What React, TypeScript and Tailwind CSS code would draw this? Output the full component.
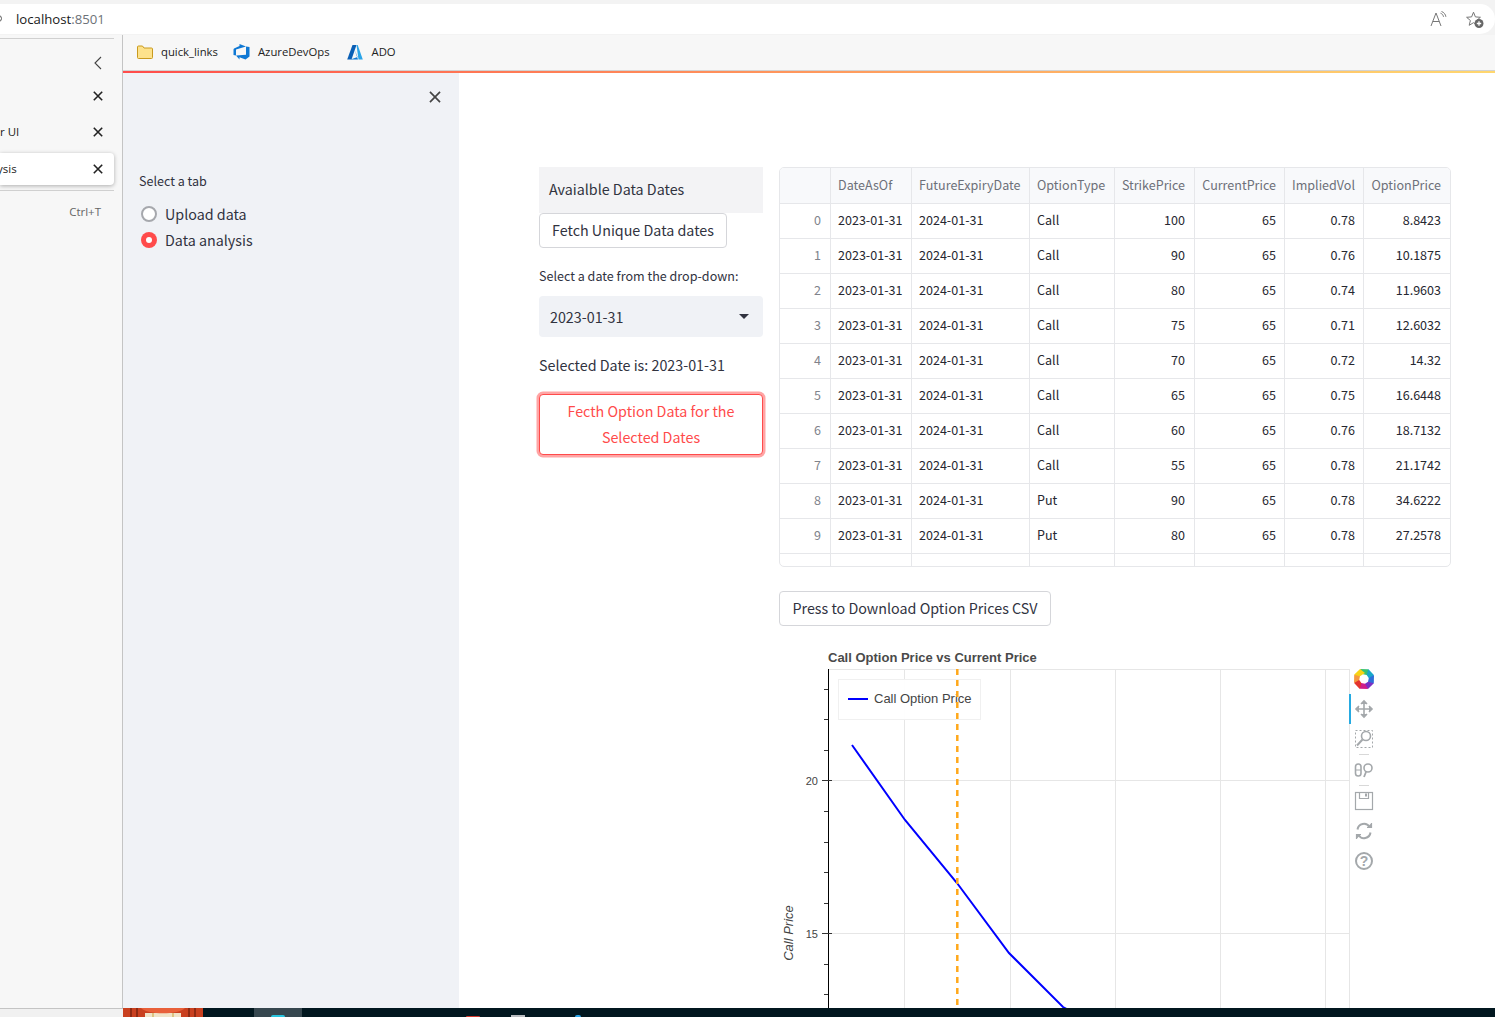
import React from "react";

const SRC = '"Noto Sans CJK SC", "Noto Sans", sans-serif';

const rows: string[][] = [
  ["0", "2023-01-31", "2024-01-31", "Call", "100", "65", "0.78", "8.8423"],
  ["1", "2023-01-31", "2024-01-31", "Call", "90", "65", "0.76", "10.1875"],
  ["2", "2023-01-31", "2024-01-31", "Call", "80", "65", "0.74", "11.9603"],
  ["3", "2023-01-31", "2024-01-31", "Call", "75", "65", "0.71", "12.6032"],
  ["4", "2023-01-31", "2024-01-31", "Call", "70", "65", "0.72", "14.32"],
  ["5", "2023-01-31", "2024-01-31", "Call", "65", "65", "0.75", "16.6448"],
  ["6", "2023-01-31", "2024-01-31", "Call", "60", "65", "0.76", "18.7132"],
  ["7", "2023-01-31", "2024-01-31", "Call", "55", "65", "0.78", "21.1742"],
  ["8", "2023-01-31", "2024-01-31", "Put", "90", "65", "0.78", "34.6222"],
  ["9", "2023-01-31", "2024-01-31", "Put", "80", "65", "0.78", "27.2578"],
];
const headers = ["", "DateAsOf", "FutureExpiryDate", "OptionType", "StrikePrice", "CurrentPrice", "ImpliedVol", "OptionPrice"];
const GRID = "grid grid-cols-[51px_81px_118px_85px_80px_90px_79px_87px]";
const PAD = ["justify-end pr-[9px]", "pl-[7px]", "pl-[7px]", "pl-[7px]", "justify-end pr-[9px]", "justify-end pr-[8px]", "justify-end pr-[8px]", "justify-end pr-[10px]"];

function X({ size = 10, color = "#222", w = 1.6 }: { size?: number; color?: string; w?: number }) {
  return (
    <svg width={size} height={size} viewBox="0 0 10 10" fill="none" stroke={color} strokeWidth={w}>
      <path d="M0.8 0.8 9.2 9.2M9.2 0.8 0.8 9.2" />
    </svg>
  );
}

function Table() {
  return (
    <div className="h-[400px] w-[672px] border border-[#e6e7ea] rounded-[5px] overflow-hidden text-[12.55px] text-[#262730]">
      <div className={`${GRID} h-[36px] bg-[#f8f9fb] border-b border-[#e6e7ea]`}>
        {headers.map((h, i) => (
          <div key={i} className={`flex items-center border-[#e6e7ea] text-[#6d7079] ${i < 7 ? "border-r" : ""} ${PAD[i]}`}>
            {h}
          </div>
        ))}
      </div>
      {[...rows, ["", "", "", "", "", "", "", ""]].map((r, ri) => (
        <div key={ri} className={`${GRID} h-[35px] border-b border-[#e6e7ea]`}>
          {r.map((c, i) => (
            <div key={i} className={`flex items-center pb-[2px] border-[#e6e7ea] ${i < 7 ? "border-r" : ""} ${PAD[i]} ${i === 0 ? "text-[#80838b]" : ""}`}>
              {c}
            </div>
          ))}
        </div>
      ))}
    </div>
  );
}

function Chart() {
  const logoColors = ["#38c172", "#18a8c9", "#2d6fd9", "#7b2fc4", "#d01f8a", "#e3342f", "#f6993f", "#f7d414"];
  const minor = [689, 719, 750, 811, 842, 872, 903, 964, 994];
  const gc = "#e6e6e6";
  const ic = "#a4a8ab";
  return (
    <svg width={672} height={363} viewBox="779 645 672 363" className="block" fontFamily='"Liberation Sans", Arial, sans-serif'>
      <text x={828} y={662} fontSize={13} fontWeight={700} fill="#4a4a4a">Call Option Price vs Current Price</text>
      {[904.5, 1010.5, 1115.5, 1220.5, 1325.5].map((x) => (
        <line key={x} x1={x} x2={x} y1={669} y2={1008} stroke={gc} />
      ))}
      {[669.5, 780.5, 933.5].map((y) => (
        <line key={y} x1={828} x2={1349} y1={y} y2={y} stroke={gc} />
      ))}
      <line x1={1349.5} x2={1349.5} y1={669} y2={1008} stroke={gc} />
      <line x1={828.5} x2={828.5} y1={669} y2={1008} stroke="#000" />
      {minor.map((y) => (
        <line key={y} x1={824} x2={828} y1={y + 0.5} y2={y + 0.5} stroke="#333" />
      ))}
      {[780.5, 933.5].map((y) => (
        <line key={y} x1={822} x2={832} y1={y} y2={y} stroke="#333" />
      ))}
      <text x={818} y={785} fontSize={11} textAnchor="end" fill="#444">20</text>
      <text x={818} y={938} fontSize={11} textAnchor="end" fill="#444">15</text>
      <text transform="translate(793 933) rotate(-90)" fontSize={13} fontStyle="italic" textAnchor="middle" fill="#444">Call Price</text>

      <rect x={838.5} y={679.5} width={142} height={40} fill="#fff" fillOpacity={0.95} stroke="#f0f0f0" />
      <line x1={848} x2={868} y1={699} y2={699} stroke="#0000ff" strokeWidth={2} />
      <text x={874} y={703} fontSize={13} fill="#444">Call Option Price</text>

      <polyline points="852,745 905,820 957,883 1009,953 1063,1007 1072,1012" fill="none" stroke="#0000ff" strokeWidth={2} />
      <line x1={957.3} x2={957.3} y1={669} y2={1008} stroke="#ffa81a" strokeWidth={2.5} strokeDasharray="6 5" />

      {/* toolbar */}
      <rect x={1349} y={694} width={2} height={30} fill="#26aae1" />
      <g transform="translate(1364 679)">
        {logoColors.map((c, i) => (
          <path key={i} transform={`rotate(${i * 45})`} d="M-4 -10 L4.200 -9.800 L5 -3.600 L-1 -4.800 Z" fill={c} />
        ))}
      </g>
      <g fill="none" stroke={ic} strokeWidth={1.6}>
        <path d="M1364 701v16M1356 709h16" />
        <path d="M1361 704l3-3 3 3M1361 714l3 3 3-3M1359 706l-3 3 3 3M1369 706l3 3-3 3" fill={ic} />
        <rect x={1355.5} y={730.5} width={17} height={17} strokeDasharray="2 2" strokeWidth={1} />
        <circle cx={1366} cy={736} r={4.5} fill="#fff" />
        <path d="M1362.5 739.5 1357 745.5" strokeWidth={2} />
        <line x1={1359} x2={1369} y1={754.5} y2={754.5} stroke="#d8d8d8" strokeWidth={1} />
        <rect x={1355.5} y={764} width={5.5} height={12} rx={2.7} />
        <path d="M1356 770h5" strokeWidth={1} />
        <circle cx={1368} cy={768} r={4} />
        <path d="M1366 772 1364 777" strokeWidth={1.8} />
        <line x1={1359} x2={1369} y1={785.5} y2={785.5} stroke="#d8d8d8" strokeWidth={1} />
        <rect x={1355.5} y={792.5} width={17} height={17} strokeWidth={1.2} />
        <path d="M1359.5 792.5v6h9v-6" strokeWidth={1.2} />
        <rect x={1365} y={793.5} width={2} height={3} fill={ic} stroke="none" />
        <path d="M1357.5 829.500a6.500 6.500 0 0 1 12-2.500M1370.500 832.500a6.500 6.500 0 0 1-12 2.500" strokeWidth={2} />
        <path d="M1367 827.500h4.500v-4.500M1361 834.500h-4.500v4.500" strokeWidth={1.2} fill={ic} />
        <circle cx={1364} cy={861} r={8} strokeWidth={2} />
      </g>
      <text x={1364} y={866} fontSize={14} fontWeight={700} textAnchor="middle" fill={ic}>?</text>
    </svg>
  );
}

function Chrome() {
  return (
    <div className="h-[35px] pt-[4px] bg-[#f3f3f3] shrink-0">
      <div className="relative h-[30px] bg-white rounded-r-[15px] flex items-center pl-[16px] pr-[11px] justify-between" style={{ fontFamily: '"Open Sans", sans-serif' }}>
        <span className="absolute left-[-5px] top-[11px] size-[7px] rounded-full border border-[#555]" />
        <span className="pt-[1px] text-[13.2px] text-[#1a1a1a]">localhost<span className="text-[#6d7278]">:8501</span></span>
        <div className="flex items-center gap-[19px]">
          <svg width="17" height="16" viewBox="0 0 17 16" fill="none" stroke="#777" strokeWidth="1">
            <path d="M1 15 6 2l5 13M2.800 10.500h6.500" />
            <path d="M10.500 2.200c1.700.6 2.800 2 3 3.600M11.500 0.500c2.400.8 4.200 3 4.400 5.300" />
          </svg>
          <svg width="18" height="17" viewBox="0 0 18 17" fill="none">
            <path d="M7.500 1.200 9.400 5.900l5 .4-3.800 3.200 1.200 4.800-4.300-2.600-4.300 2.600 1.200-4.800L.6 6.300l5-.4z" stroke="#777" strokeWidth="1" />
            <circle cx="13" cy="12.500" r="4.500" fill="#666" />
            <path d="M13 10.300v4.400M10.800 12.500h4.400" stroke="#fff" strokeWidth="1.300" />
          </svg>
        </div>
      </div>
    </div>
  );
}

function Favorites() {
  return (
    <div className="w-[123px] shrink-0 bg-[#f7f7f7] border-r border-[#c4c4c4] flex flex-col text-[#222]" style={{ fontFamily: '"Open Sans", sans-serif' }}>
      <div className="w-[114px] border-t border-[#d0d0d0] mt-[3px] h-[40px] flex items-center justify-end pr-[12px] pt-[9px]">
        <svg width="9" height="14" viewBox="0 0 9 14" fill="none" stroke="#444" strokeWidth="1.100"><path d="M8 1 2 7l6 6" /></svg>
      </div>
      <div className="w-[114px] h-[35px] flex items-center justify-between pr-[11px] text-[12px]">
        <span />
        <X />
      </div>
      <div className="w-[114px] h-[37px] flex items-center justify-between pr-[11px] text-[11.5px]">
        <span>r UI</span>
        <X />
      </div>
      <div className="w-[114px] h-[32px] mt-[3px] bg-white rounded-r-[4px] shadow-[0_1px_4px_rgba(0,0,0,0.3)] flex items-center justify-between pr-[11px] text-[11.5px]">
        <span className="-ml-[3px]">ysis</span>
        <X />
      </div>
      <div className="w-[114px] border-t border-[#d0d0d0] mt-[5px]" />
      <div className="w-[114px] pr-[13px] pt-[12px] text-right text-[11.5px] text-[#666]">Ctrl+T</div>
    </div>
  );
}

function Bookmarks() {
  return (
    <div className="h-[36px] pb-[1px] shrink-0 bg-[#f7f7f7] border-b border-[#d2d2d2] flex items-center pl-[14px] text-[11.3px] text-[#222]" style={{ fontFamily: '"Open Sans", sans-serif' }}>
      <svg width="16" height="14" viewBox="0 0 16 14" className="mr-[8px]">
        <path d="M.5 2A1 1 0 0 1 1.500 1h4l1.500 2h7.500a1 1 0 0 1 1 1v8.500a1 1 0 0 1-1 1h-13a1 1 0 0 1-1-1z" fill="#fde28c" stroke="#c99a1f" />
      </svg>
      <span className="mr-[15px]">quick_links</span>
      <svg width="17" height="16" viewBox="0 0 17 16" className="mr-[8px]">
        <path d="M16.500 3v9.500l-4 3-6-2.200v2.200L3 11.500l10-.8V2.500zM13 2.500 6.500 0v2L1 4.500l-.5 1V11L3 11.500V5.500z" fill="#0f78d4" />
      </svg>
      <span className="mr-[17px]">AzureDevOps</span>
      <svg width="16" height="15" viewBox="0 0 16 15" className="mr-[9px]">
        <path d="M5.500 0h4L4.500 14.500H.200z" fill="#0a5fb5" />
        <path d="M9.500 0h1.200L15.800 14.500h-4.300z" fill="#2aa4e8" />
        <path d="M8 5.500 10.500 12 3.500 14.500H11L9 9z" fill="#0f78d4" />
      </svg>
      <span>ADO</span>
    </div>
  );
}

function Sidebar() {
  return (
    <aside className="w-[336px] shrink-0 bg-[#f0f2f6] text-[#31333f] flex flex-col" style={{ fontFamily: SRC }}>
      <div className="flex justify-end pr-[18px] pt-[18px]">
        <X size={12} color="#444" w={1.4} />
      </div>
      <div className="pl-[16px] pt-[68px] text-[12.55px] leading-[20px]">Select a tab</div>
      <div className="pl-[18px] pt-[15px] flex flex-col gap-[10px] text-[14.3px] leading-[16px]">
        <div className="flex items-center gap-[8px] h-[16px]">
          <span className="size-[16px] rounded-full border-2 border-[#a6a8ad] bg-white" />
          <span>Upload data</span>
        </div>
        <div className="flex items-center gap-[8px] h-[16px]">
          <span className="size-[16px] rounded-full bg-[#ff4b4b] flex items-center justify-center">
            <span className="size-[6px] rounded-full bg-white" />
          </span>
          <span>Data analysis</span>
        </div>
      </div>
    </aside>
  );
}

function LeftColumn() {
  return (
    <div className="w-[224px] shrink-0 flex flex-col text-[#31333f]">
      <div className="h-[46px] pb-[2px] bg-[#f3f3f5] pl-[10px] flex items-center text-[14.3px]">Avaialble Data Dates</div>
      <button className="w-[188px] h-[35px] pb-[2px] border border-[#d5d6da] rounded-[4px] bg-white text-[14.3px]">Fetch Unique Data dates</button>
      <div className="mt-[18px] text-[12.55px] leading-[20px]">Select a date from the drop-down:</div>
      <div className="mt-[10px] h-[41px] bg-[#f0f2f6] rounded-[4px] pl-[11px] pr-[14px] flex items-center justify-between text-[14.3px]">
        <span>2023-01-31</span>
        <svg width="10" height="5" viewBox="0 0 10 5"><path d="M0 0h10L5 5z" fill="#31333f" /></svg>
      </div>
      <div className="mt-[15px] text-[14.3px] leading-[26px]">Selected Date is: 2023-01-31</div>
      <button className="mt-[16px] h-[61px] pb-[2px] border border-[#ff4b4b] rounded-[4px] bg-white text-[14.3px] leading-[26px] text-[#ff4b4b] shadow-[0_0_0_2.5px_rgba(255,75,75,0.5)] px-[20px]">
        Fecth Option Data for the Selected Dates
      </button>
    </div>
  );
}

function Taskbar() {
  return (
    <div className="h-[9px] shrink-0 flex items-end bg-[#01171f]">
      <div className="w-[123px] h-[9px] bg-[#f1f1f1] border-t border-[#c4c4c4]" />
      <svg width="80" height="9" viewBox="0 0 80 9" className="block">
        <rect width="80" height="9" fill="#c9401f" />
        <path d="M8 0v9M14 0v9M66 0v9M72 0v9" stroke="#8f2a12" strokeWidth="2" />
        <path d="M22 5h36v4H22z" fill="#f0e3c8" />
        <path d="M18 0c6 7 38 7 44 0z" fill="#e8603a" />
        <path d="M30 5v4M50 5v4" stroke="#c9a53c" />
      </svg>
      <div className="w-[51px]" />
      <div className="w-[48px] h-[9px] bg-[#36474f] flex items-end justify-center">
        <span className="w-[14px] h-[2px] rounded-t-full bg-[#27c4de]" />
      </div>
      <span className="ml-[164px] w-[14px] h-[1px] rounded-t-full bg-[#d2382c]" />
      <span className="ml-[31px] w-[14px] h-[2px] bg-[#b8bcc0]" />
      <span className="ml-[50px] w-[6px] h-[2px] rounded-t-full bg-[#2aa4e8]" />
    </div>
  );
}

export default function App() {
  return (
    <div className="w-[1495px] h-[1017px] overflow-hidden flex flex-col bg-[#f3f3f3]">
      <Chrome />
      <div className="flex-1 min-h-0 flex">
        <Favorites />
        <div className="flex-1 min-w-0 flex flex-col">
          <Bookmarks />
          <div className="h-[2px] shrink-0 bg-gradient-to-r from-[#ff4b4b] to-[#ffd76f]" />
          <div className="flex-1 min-h-0 flex bg-white overflow-hidden">
            <Sidebar />
            <main className="flex-1 min-w-0 pl-[80px] pt-[94px] flex gap-[16px] items-start" style={{ fontFamily: SRC }}>
              <LeftColumn />
              <div className="w-[672px] shrink-0 flex flex-col">
                <Table />
                <button className="mt-[24px] pb-[2px] self-start w-[272px] h-[35px] border border-[#d5d6da] rounded-[4px] bg-white text-[14.3px] text-[#31333f]">Press to Download Option Prices CSV</button>
                <div className="mt-[19px]"><Chart /></div>
              </div>
            </main>
          </div>
        </div>
      </div>
      <Taskbar />
    </div>
  );
}
